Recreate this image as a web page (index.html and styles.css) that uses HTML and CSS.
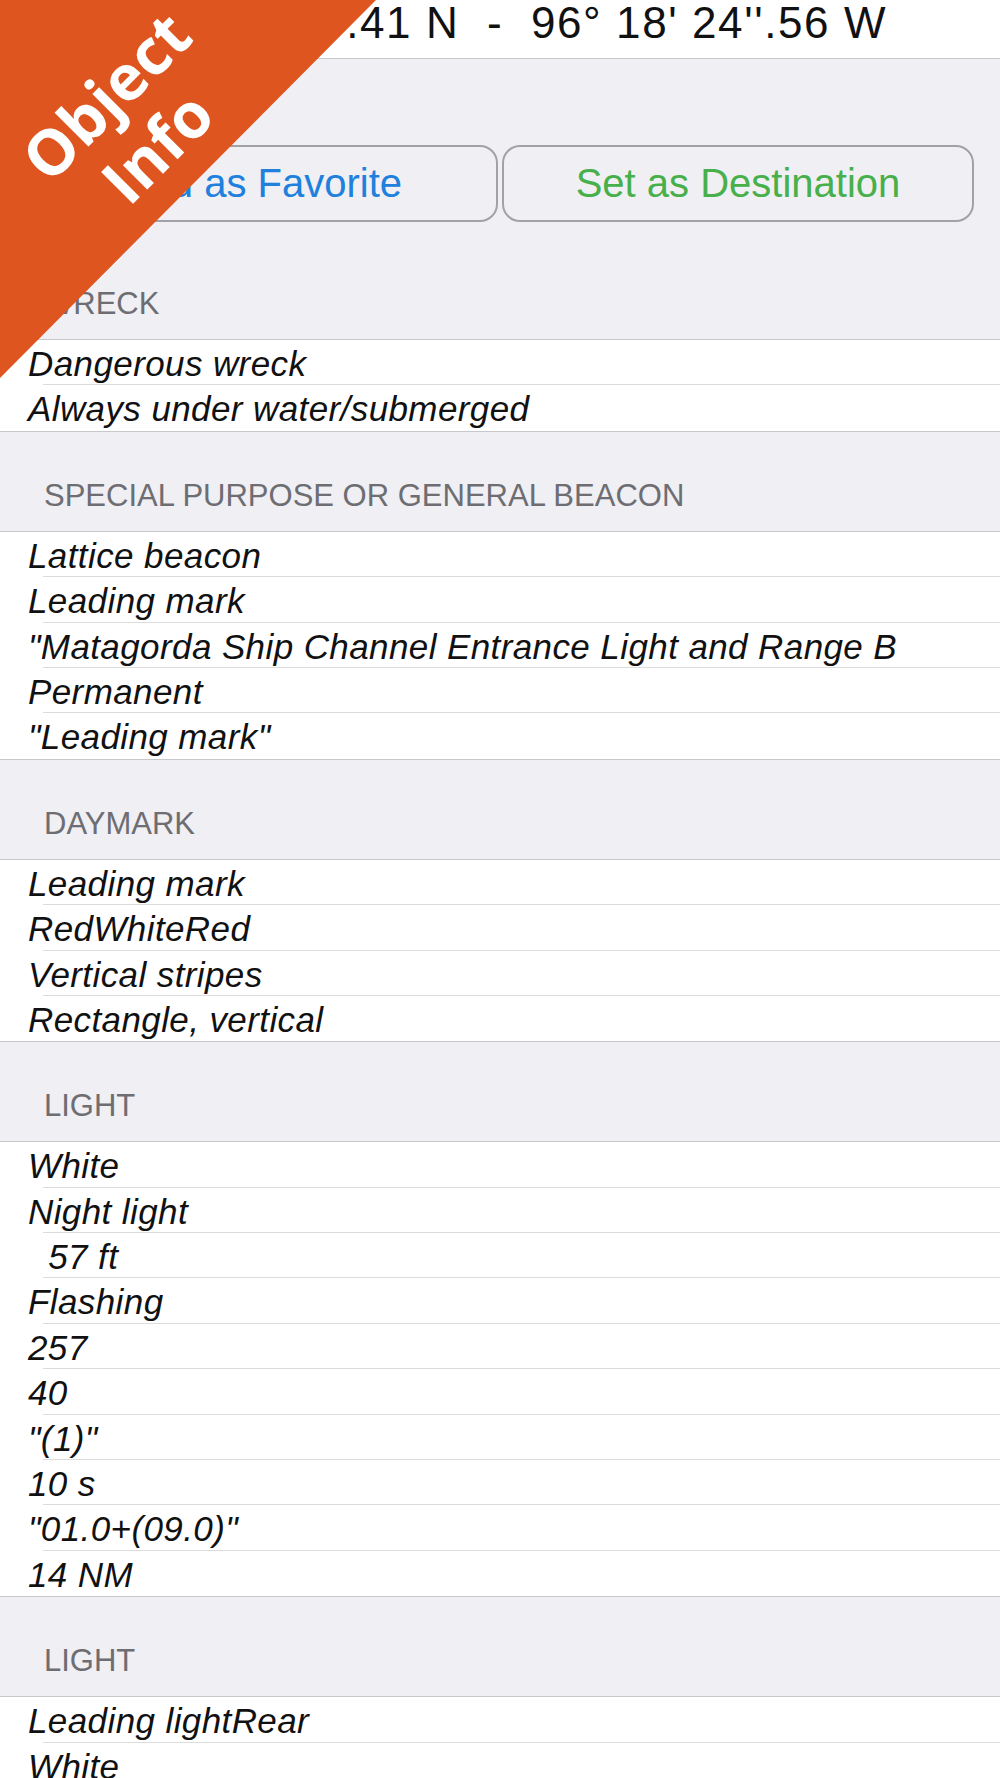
FILE: index.html
```html
<!DOCTYPE html>
<html lang="en">
<head>
    <meta charset="UTF-8">
    <meta name="viewport" content="width=device-width, initial-scale=1.0">
    <title>Object Info</title>
    <link rel="stylesheet" href="styles.css">
</head>
<body>
    <div class="banner">
        <div class="banner-text">Object<br>Info</div>
    </div>

    <div class="coords">28° 25' 47''.41 N  -  96° 18' 24''.56 W</div>

    <div class="actions">
        <button type="button" class="btn btn-fav">Add as Favorite</button>
        <button type="button" class="btn btn-dest">Set as Destination</button>
    </div>

    <div class="section-head">WRECK</div>
    <div class="rows">
        <div class="row">Dangerous wreck</div>
        <div class="row">Always under water/submerged</div>
    </div>

    <div class="section-head">SPECIAL PURPOSE OR GENERAL BEACON</div>
    <div class="rows">
        <div class="row">Lattice beacon</div>
        <div class="row">Leading mark</div>
        <div class="row">"Matagorda Ship Channel Entrance Light and Range B</div>
        <div class="row">Permanent</div>
        <div class="row">"Leading mark"</div>
    </div>

    <div class="section-head">DAYMARK</div>
    <div class="rows">
        <div class="row">Leading mark</div>
        <div class="row">RedWhiteRed</div>
        <div class="row">Vertical stripes</div>
        <div class="row">Rectangle, vertical</div>
    </div>

    <div class="section-head">LIGHT</div>
    <div class="rows">
        <div class="row">White</div>
        <div class="row">Night light</div>
        <div class="row">  57 ft</div>
        <div class="row">Flashing</div>
        <div class="row">257</div>
        <div class="row">40</div>
        <div class="row">"(1)"</div>
        <div class="row">10 s</div>
        <div class="row">"01.0+(09.0)"</div>
        <div class="row">14 NM</div>
    </div>

    <div class="section-head">LIGHT</div>
    <div class="rows">
        <div class="row">Leading lightRear</div>
        <div class="row">White</div>
        <div class="row">Night light</div>
    </div>
</body>
</html>
```

FILE: styles.css
```css
html, body {
    margin: 0;
    padding: 0;
    overflow: hidden;
}
body {
    font-family: "Liberation Sans", Arial, sans-serif;
    background-color: #efeff4;
    color: #000;
    position: relative;
}

/* corner ribbon */
.banner {
    position: absolute;
    top: 0;
    left: 0;
    width: 376px;
    height: 378px;
    background-color: #de551f;
    clip-path: polygon(0 0, 100% 0, 0 100%);
    z-index: 10;
}
.banner-text {
    position: absolute;
    left: 131px;
    top: 121px;
    transform: translate(-50%, -50%) rotate(-45deg);
    color: #fff;
    font-family: "Open Sans", sans-serif;
    font-weight: 700;
    font-size: 63px;
    line-height: 72px;
    text-align: center;
    white-space: nowrap;
}

.coords {
    height: 58px;
    background-color: #fff;
    border-bottom: 1px solid #c8c7cc;
    font-size: 44px;
    letter-spacing: 1.6px;
    line-height: 46px;
    text-align: center;
    white-space: pre;
    color: #111;
}

.actions {
    display: flex;
    gap: 4px;
    padding: 86px 26px 18px;
}
.btn {
    flex: 1;
    height: 77px;
    box-sizing: border-box;
    background: transparent;
    border: 2px solid #a2a2a6;
    border-radius: 18px;
    font-family: "Liberation Sans", Arial, sans-serif;
    font-size: 40px;
    padding: 0;
}
.btn-fav {
    color: #2080dc;
}
.btn-dest {
    color: #47b04b;
}

.section-head {
    height: 100px;
    box-sizing: border-box;
    display: flex;
    align-items: flex-end;
    padding: 0 0 20px 44px;
    font-size: 31px;
    line-height: 31px;
    color: #6d6d72;
    border-bottom: 1px solid #c8c7cc;
}

.rows {
    background-color: #fff;
    border-bottom: 1px solid #c8c7cc;
}
/* inset separator starts at 43px, text at 28px */
.row {
    height: 45.4px;
    box-sizing: border-box;
    padding: 3px 0 0 28px;
    background: linear-gradient(#dcdcdc, #dcdcdc) no-repeat left 43px bottom / calc(100% - 43px) 1px;
    font-size: 35px;
    font-style: italic;
    letter-spacing: 0.4px;
    line-height: 42.4px;
    white-space: pre;
    color: #111;
}
.row:last-child {
    background: none;
}
```
